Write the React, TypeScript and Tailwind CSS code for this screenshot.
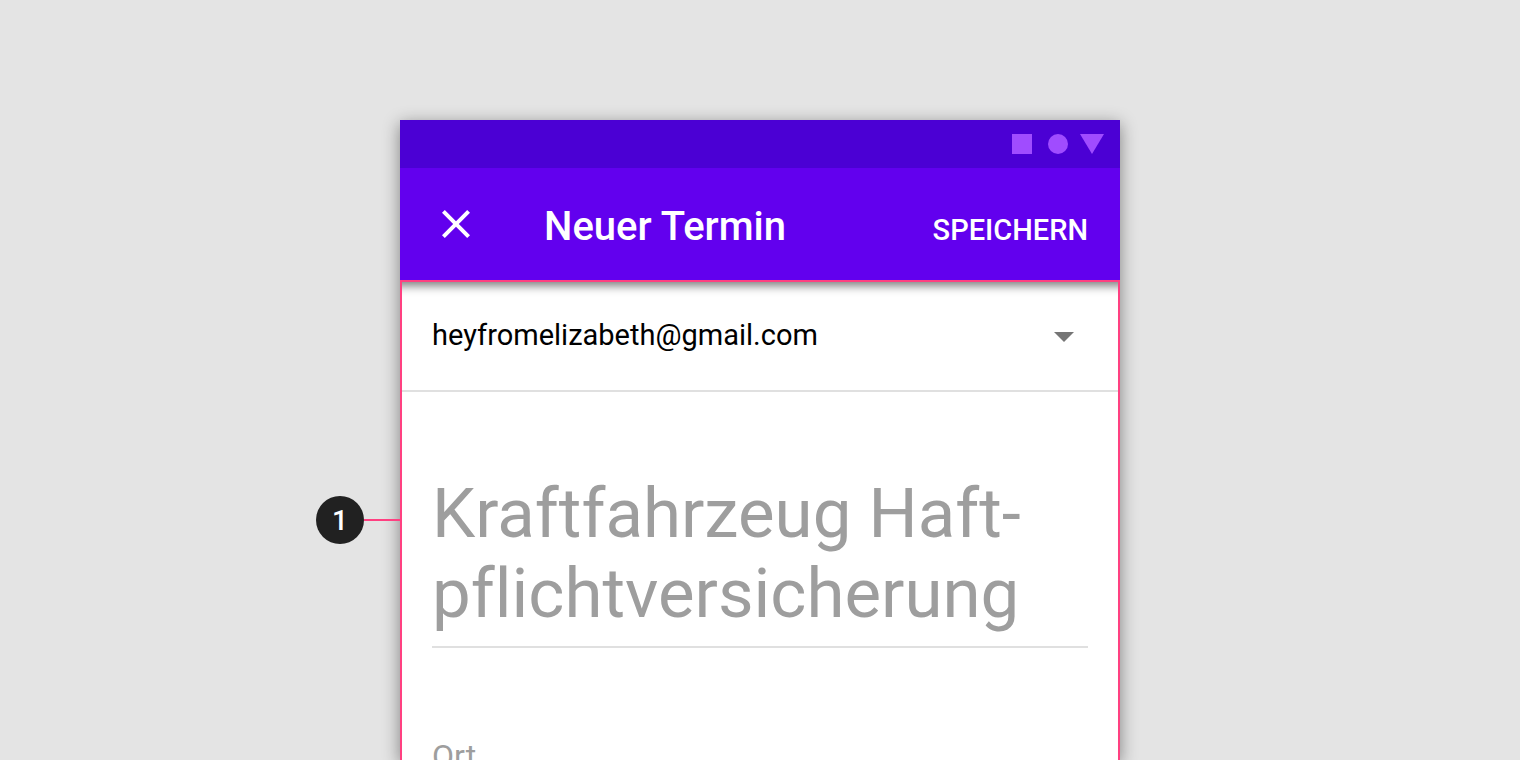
function StatusBar() {
  return (
    <div className="flex h-12 shrink-0 items-center justify-end bg-[#4b00d4] pr-4">
      <svg className="h-5 w-[92px]" viewBox="0 0 92 20" fill="#a04cff" aria-hidden="true">
        <rect width="20" height="20" />
        <circle cx="46" cy="10" r="10" />
        <path d="M68 0h24L80 20z" />
      </svg>
    </div>
  );
}

function AppBar() {
  return (
    <header className="flex h-28 shrink-0 items-center bg-[#6200ee] px-8 text-white">
      <button type="button" aria-label="Schließen" className="mr-16 size-12 shrink-0">
        <svg className="size-12" viewBox="0 0 24 24" fill="currentColor" aria-hidden="true">
          <path d="M19 6.41L17.59 5 12 10.59 6.41 5 5 6.41 10.59 12 5 17.59 6.41 19 12 13.41 17.59 19 19 17.59 13.41 12z" />
        </svg>
      </button>
      <div className="flex grow items-baseline justify-between pt-1.5">
        <h1 className="text-[40px] leading-12 font-medium">Neuer Termin</h1>
        <button type="button" className="text-[29px] leading-8 font-medium uppercase">
          Speichern
        </button>
      </div>
    </header>
  );
}

function AccountSelect() {
  return (
    <div className="flex items-center border-b-2 border-[#e0e0e0] px-[30px] py-[30px]">
      <select
        aria-label="Konto"
        className="h-12 w-full appearance-none bg-transparent text-[29px] text-black outline-none"
      >
        <option>heyfromelizabeth@gmail.com</option>
      </select>
      <svg
        className="pointer-events-none -ml-12 size-12 shrink-0"
        viewBox="0 0 24 24"
        fill="#757575"
        aria-hidden="true"
      >
        <path d="M7 10l5 5 5-5z" />
      </svg>
    </div>
  );
}

function Callout() {
  return (
    <div className="absolute top-[214px] right-full mr-0.5 flex items-center">
      <span className="flex size-12 items-center justify-center rounded-full bg-[#212121] pt-0.5 text-[28px] font-medium text-white">
        1
      </span>
      <span className="h-0.5 w-9 bg-[#ff4081]" />
    </div>
  );
}

export default function App() {
  return (
    <main className="flex h-screen justify-center overflow-hidden bg-[#e4e4e4] pt-30 font-['Roboto',sans-serif]">
      <div className="flex w-full max-w-[720px] flex-col shadow-[0_4px_16px_rgba(0,0,0,0.44)]">
        <StatusBar />
        <AppBar />
        <form className="relative shrink-0 grow border-2 border-[#ff4081] bg-white shadow-[inset_0_14px_10px_-10px_rgba(0,0,0,0.5)]">
          <Callout />
          <AccountSelect />
          <div className="px-[30px] pt-[82px]">
            <textarea
              aria-label="Titel"
              rows={2}
              placeholder={"Kraftfahrzeug Haft-\npflichtversicherung"}
              className="block w-full resize-none overflow-hidden border-b-2 border-[#e0e0e0] pb-3 text-[69px] leading-20 outline-none [font-variant-ligatures:none] placeholder:text-[#9e9e9e]"
            />
            <label htmlFor="ort" className="mt-21 block text-[32px] leading-12 text-[#9e9e9e]">
              Ort
            </label>
            <input id="ort" type="text" className="w-full border-b-2 border-[#e0e0e0] text-[32px] outline-none" />
          </div>
        </form>
      </div>
    </main>
  );
}
